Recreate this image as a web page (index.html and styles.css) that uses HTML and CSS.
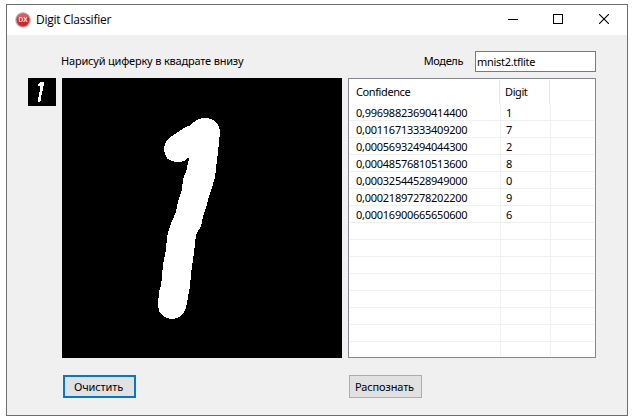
FILE: index.html
```html
<!DOCTYPE html>
<html lang="ru">
<head>
<meta charset="utf-8">
<title>Digit Classifier</title>
<link rel="stylesheet" href="styles.css">
</head>
<body>
<div class="window">
  <header class="titlebar">
    <svg class="app-icon" width="16" height="16" viewBox="0 0 16 16">
      <circle cx="8" cy="8" r="7.8" fill="#b5b2b2"/>
      <circle cx="8" cy="8" r="6.5" fill="#d9242d"/>
      <path d="M2.5 5.2A6.2 6.2 0 0 1 13.5 5.2Z" fill="#e45a60"/>
      <text x="8" y="10.2" text-anchor="middle" textLength="9">DX</text>
    </svg>
    <h1 class="title">Digit Classifier</h1>
    <div class="controls">
      <svg width="10" height="10" viewBox="0 0 10 10"><path d="M0 5.5H10"/></svg>
      <svg width="10" height="10" viewBox="0 0 10 10"><path d="M.5.5H9.5V9.5H.5Z"/></svg>
      <svg class="close" width="10" height="10" viewBox="0 0 10 10"><path d="M0 0 10 10M10 0 0 10"/></svg>
    </div>
  </header>
  <main class="client">
    <div class="top">
      <span class="prompt">Нарисуй циферку в квадрате внизу</span>
      <label class="model" for="model">Модель</label>
      <input class="edit" id="model" value="mnist2.tflite" spellcheck="false">
    </div>
    <div class="middle">
      <svg class="thumb" width="28" height="28" viewBox="0 0 28 28">
        <path d="M12 4H16V8H15V13H14V17H13V23H12V24H10V19H11V14H12V8H10V6H11V5H12Z" fill="#fff"/>
      </svg>
      <svg class="canvas" width="280" height="280" viewBox="62 78 280 280">
        <path fill="#fff" d="M164 149C164 143 168 138 175 134L184 128L191 125C195 120 200 118 206 118C214 118 220 124 220 132L219 143L217 160L215 178L213 184L208 200L206 208L203 217L201 226L196 235L194 252L191 274L190 286L188 297L186 308C184 315 179 319 172 319C164 319 158 313 158 306L159 291L161 286L163 265L166 249L167 237L170 226L176 212L178 201L182 190L183 179L186 172L189 159L188 158C185 161 182 162 177 162C169 162 164 157 164 149Z"/>
      </svg>
      <div class="list">
        <div class="head"><span>Confidence</span><span>Digit</span><span></span></div>
        <div class="rows">
          <div class="row"><span>0,99698823690414400</span><span>1</span><span></span></div>
          <div class="row"><span>0,00116713333409200</span><span>7</span><span></span></div>
          <div class="row"><span>0,00056932494044300</span><span>2</span><span></span></div>
          <div class="row"><span>0,00048576810513600</span><span>8</span><span></span></div>
          <div class="row"><span>0,00032544528949000</span><span>0</span><span></span></div>
          <div class="row"><span>0,00021897278202200</span><span>9</span><span></span></div>
          <div class="row"><span>0,00016900665650600</span><span>6</span><span></span></div>
          <div class="row"><span></span><span></span><span></span></div>
          <div class="row"><span></span><span></span><span></span></div>
          <div class="row"><span></span><span></span><span></span></div>
          <div class="row"><span></span><span></span><span></span></div>
          <div class="row"><span></span><span></span><span></span></div>
          <div class="row"><span></span><span></span><span></span></div>
          <div class="row"><span></span><span></span><span></span></div>
          <div class="row last"><span></span><span></span><span></span></div>
        </div>
      </div>
    </div>
    <div class="buttons">
      <button class="btn focused">Очистить</button>
      <button class="btn">Распознать</button>
    </div>
  </main>
</div>
</body>
</html>
```
FILE: styles.css
```css
* { box-sizing: border-box; }
body {
  margin: 0;
  background: #fff;
  color: #000;
  font: 11px/17px "Noto Sans", "Open Sans", sans-serif;
  letter-spacing: -0.26px;
}
svg { display: block; flex: none; }
.window {
  width: 622px;
  height: 412px;
  margin: 4px 0 0 6px;
  border: 1px solid #6d6d6d;
  background: #f0f0f0;
}
.titlebar {
  display: flex;
  align-items: center;
  height: 30px;
  padding: 0 18px 0 8px;
  background: #fff;
}
.app-icon text {
  font: bold 6.5px "Liberation Sans", sans-serif;
  fill: #fff;
  letter-spacing: 0;
}
.title {
  flex: 1;
  margin: 0 0 0 5px;
  font: 12px/16px "Open Sans", sans-serif;
  letter-spacing: -0.25px;
}
.controls { display: flex; gap: 35px; margin-top: -2px; }
.controls path { fill: none; stroke: #000; shape-rendering: crispEdges; }
.controls .close { margin-left: 1px; }
.controls .close path { shape-rendering: auto; stroke-width: 1.1; }
.top {
  display: flex;
  align-items: center;
  height: 21px;
  margin: 16px 31px 0 54px;
}
.prompt, .model { padding-bottom: 2px; }
.prompt { flex: 1; letter-spacing: -0.19px; }
.model { margin-right: 12px; letter-spacing: -0.38px; }
.edit {
  width: 121px;
  height: 21px;
  padding: 0 1px 1px;
  border: 1px solid #7a7a7a;
  border-radius: 0;
  background: #fff;
  color: #000;
  font: inherit;
  letter-spacing: -0.3px;
  outline: 0;
}
.middle { display: flex; margin: 6px 0 0 21px; }
.thumb { background: #000; shape-rendering: crispEdges; }
.canvas { margin: 0 6px; background: #000; shape-rendering: crispEdges; }
.list {
  width: 248px;
  height: 280px;
  padding: 1px;
  border: 1px solid #828790;
  background: #fff;
}
.head, .row { display: grid; }
.head {
  grid-template-columns: 150px 50px 1fr;
  height: 24px;
  line-height: 24px;
  letter-spacing: -0.4px;
}
.head span { border-right: 1px solid #e5e5e5; padding-left: 5px; }
.head span:first-child, .row span:first-child { padding-left: 6px; }
.head span:last-child, .row span:last-child { border: 0; }
.row {
  grid-template-columns: 151px 50px 1fr;
  height: 17px;
  line-height: 18px;
  border-bottom: 1px solid #f0f0f0;
}
.row span { border-right: 1px solid #f0f0f0; padding-left: 5px; height: 17px; }
.row.last { height: 14px; border: 0; }
.row.last span { height: 14px; }
.buttons { display: flex; gap: 213px; margin: 17px 0 0 56px; }
.btn {
  width: 73px;
  height: 23px;
  padding: 0 2px 0 0;
  border: 1px solid #adadad;
  background: #e1e1e1;
  color: #000;
  font: inherit;
  letter-spacing: -0.14px;
}
.btn.focused { border: 2px solid #0078d7; }
```
